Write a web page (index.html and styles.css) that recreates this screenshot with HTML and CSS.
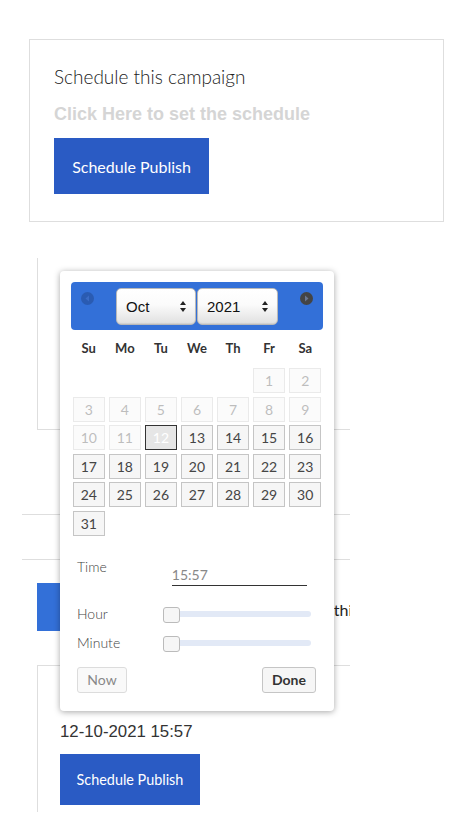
FILE: index.html
```html
<!DOCTYPE html>
<html lang="en">
<head>
<meta charset="utf-8">
<title>Schedule campaign</title>
<link rel="stylesheet" href="styles.css">
</head>
<body>
<main class="page">
  <section class="card">
    <h2 class="card-title">Schedule this campaign</h2>
    <p class="card-hint">Click Here to set the schedule</p>
    <button class="btn-primary btn-lg" type="button">Schedule Publish</button>
  </section>

  <div class="backdrop">
    <div class="ghost-box"></div>
    <div class="rule rule-first"></div>
    <div class="rule rule-second"></div>
    <div class="ghost-row">
      <button class="btn-ghost" type="button">Schedule Publish</button>
      <span class="ghost-text">Schedule this campaign</span>
    </div>
    <section class="ghost-card">
      <div class="stamp">12-10-2021 15:57</div>
      <button class="btn-primary btn-sm" type="button">Schedule Publish</button>
    </section>
  </div>

  <div class="picker">
    <div class="picker-header">
      <span class="nav nav-prev">
        <svg width="13" height="13" viewBox="0 0 13 13"><circle cx="6.5" cy="6.5" r="6.5" fill="#2a5bb2"/><path d="M8 3.5 L4.5 6.5 L8 9.5 Z" fill="#3b6cc6"/></svg>
      </span>
      <div class="selects">
        <div class="select select-month"><span>Oct</span>
          <svg width="6" height="11" viewBox="0 0 6 11"><path d="M3 0 L6 4 H0 Z M0 7 H6 L3 11 Z" fill="#222"/></svg>
        </div>
        <div class="select select-year"><span>2021</span>
          <svg width="6" height="11" viewBox="0 0 6 11"><path d="M3 0 L6 4 H0 Z M0 7 H6 L3 11 Z" fill="#222"/></svg>
        </div>
      </div>
      <span class="nav nav-next">
        <svg width="13" height="13" viewBox="0 0 13 13"><circle cx="6.5" cy="6.5" r="6.5" fill="#444"/><path d="M5 3.5 L8.5 6.5 L5 9.5 Z" fill="#6a7690"/></svg>
      </span>
    </div>

    <div class="dow">
      <span>Su</span><span>Mo</span><span>Tu</span><span>We</span><span>Th</span><span>Fr</span><span>Sa</span>
    </div>

    <div class="days">
      <span class="day empty"></span><span class="day empty"></span><span class="day empty"></span><span class="day empty"></span><span class="day empty"></span>
      <span class="day off">1</span><span class="day off">2</span>
      <span class="day off">3</span><span class="day off">4</span><span class="day off">5</span><span class="day off">6</span><span class="day off">7</span><span class="day off">8</span><span class="day off">9</span>
      <span class="day off">10</span><span class="day off">11</span><span class="day active">12</span><span class="day">13</span><span class="day">14</span><span class="day">15</span><span class="day">16</span>
      <span class="day">17</span><span class="day">18</span><span class="day">19</span><span class="day">20</span><span class="day">21</span><span class="day">22</span><span class="day">23</span>
      <span class="day">24</span><span class="day">25</span><span class="day">26</span><span class="day">27</span><span class="day">28</span><span class="day">29</span><span class="day">30</span>
      <span class="day">31</span>
    </div>

    <div class="time">
      <div class="time-row row-time">
        <span class="time-label">Time</span>
        <span class="time-value">15:57</span>
      </div>
      <div class="time-row row-hour">
        <span class="time-label">Hour</span>
        <div class="slider"><span class="handle"></span></div>
      </div>
      <div class="time-row row-minute">
        <span class="time-label">Minute</span>
        <div class="slider"><span class="handle"></span></div>
      </div>
    </div>

    <div class="picker-actions">
      <button class="pbtn pbtn-now" type="button">Now</button>
      <button class="pbtn pbtn-done" type="button">Done</button>
    </div>
  </div>
</main>
</body>
</html>
```

FILE: styles.css
```css
* { box-sizing: border-box; }

html, body {
  margin: 0;
  padding: 0;
  background: #fff;
}

body {
  font-family: Lato, "Liberation Sans", sans-serif;
  color: #222;
}

.page {
  position: relative;
  width: 466px;
  height: 830px;
  overflow: hidden;
  padding-top: 39px;
}

/* ---------- top card ---------- */
.card {
  margin-left: 29px;
  width: 415px;
  border: 1px solid #dedede;
  padding: 25px 24px 27px;
}

.card-title {
  margin: 0;
  font-size: 19px;
  line-height: 24px;
  font-weight: 300;
  color: #222;
}

.card-hint {
  margin: 14px 0 13px;
  font-family: "Liberation Sans", Arial, sans-serif;
  font-weight: 700;
  font-size: 18px;
  line-height: 22px;
  color: #d5d5d5;
}

.btn-primary {
  display: flex;
  align-items: center;
  justify-content: center;
  border: 0;
  padding: 0;
  background: #2a5bc4;
  color: #fff;
  font-family: Lato, sans-serif;
}

.btn-lg {
  width: 155px;
  height: 56px;
  font-size: 16px;
}

.btn-sm {
  width: 140px;
  height: 51px;
  font-size: 14.4px;
  margin-top: 11px;
}

/* ---------- content behind the popup ---------- */
.backdrop {
  margin-top: 36px;
  margin-left: 22px;
  width: 328px;
  overflow: hidden;
}

.ghost-box {
  margin-left: 15px;
  height: 172px;
  border-left: 1px solid #dedede;
  border-bottom: 1px solid #dedede;
}

.rule {
  height: 1px;
  background: #dedede;
}

.rule-first { margin-top: 84px; }
.rule-second { margin-top: 44px; }

.ghost-row {
  display: flex;
  align-items: flex-start;
  margin-top: 23px;
  white-space: nowrap;
}

.btn-ghost {
  flex: none;
  margin-left: 15px;
  width: 164px;
  height: 48px;
  border: 0;
  padding: 0;
  background: #3370d8;
  color: #fff;
  font-family: Lato, sans-serif;
  font-size: 16px;
}

.ghost-text {
  flex: none;
  margin-left: 65px;
  margin-top: 17px;
  font-size: 16px;
  line-height: 20px;
  color: #222;
}

.ghost-card {
  margin-top: 34px;
  margin-left: 15px;
  border-top: 1px solid #dedede;
  border-left: 1px solid #dedede;
  padding: 55px 0 7px 22px;
}

.stamp {
  font-family: "Liberation Sans", Arial, sans-serif;
  font-size: 16.8px;
  line-height: 22px;
  color: #333;
}

/* ---------- datepicker popup ---------- */
.picker {
  position: absolute;
  left: 60px;
  top: 271px;
  width: 274px;
  padding: 11px 11px 18px;
  background: #fff;
  border-radius: 4px;
  box-shadow: 0 1px 6px rgba(0, 0, 0, 0.35);
}

.picker-header {
  display: flex;
  justify-content: space-between;
  align-items: center;
  height: 48px;
  padding: 0 10px;
  background: #3370d8;
  border-radius: 4px;
}

.nav {
  align-self: flex-start;
  margin-top: 10px;
  width: 13px;
  height: 13px;
}

.nav svg { display: block; }

.selects {
  display: flex;
  gap: 1px;
}

.select {
  display: flex;
  align-items: center;
  justify-content: space-between;
  height: 37px;
  padding: 0 9px 0 9px;
  border: 1px solid #b9b9b9;
  border-radius: 5px;
  background: linear-gradient(#ffffff, #fbfbfb 45%, #e0e0e0);
  box-shadow: inset 0 -1px 1px rgba(0, 0, 0, 0.08);
  font-family: "Liberation Sans", Arial, sans-serif;
  font-size: 15px;
  color: #111;
}

.select svg { display: block; }

.select-month { width: 80px; }
.select-year { width: 81px; }

.dow {
  display: grid;
  grid-template-columns: repeat(7, 1fr);
  column-gap: 4.5px;
  width: 248px;
  margin: 8px 0 0 2px;
  font-size: 13px;
  line-height: 20px;
  font-weight: 700;
  color: #333;
  text-align: center;
}

.days {
  display: grid;
  grid-template-columns: repeat(7, 1fr);
  column-gap: 4.5px;
  row-gap: 3.6px;
  width: 248px;
  margin: 10px 0 0 2px;
}

.day {
  height: 25px;
  border: 1px solid #c5c5c5;
  background: #f6f6f6;
  color: #454545;
  font-size: 14px;
  line-height: 23px;
  text-align: center;
}

.day.empty {
  visibility: hidden;
}

.day.off {
  opacity: 0.35;
}

.day.active {
  border-color: #333;
  background: #e6e6e6;
  color: #fff;
}

.time {
  margin-top: 21.6px;
}

.time-row {
  display: grid;
  grid-template-columns: 40% 1fr;
  align-items: start;
}

.time-label {
  padding-left: 6px;
  font-size: 14px;
  line-height: 18px;
  font-weight: 300;
  color: #444;
}

.time-value {
  width: 135px;
  margin-top: 7px;
  font-size: 14px;
  line-height: 20px;
  color: #888;
  border-bottom: 1px solid #333;
}

.row-hour { margin-top: 19px; }
.row-minute { margin-top: 11px; }

.slider {
  position: relative;
  margin: 6px 12px 0 0;
  height: 6px;
  border-radius: 3px;
  background: #e2e9f6;
}

.handle {
  position: absolute;
  left: -9px;
  top: -4px;
  width: 17px;
  height: 16px;
  border: 1px solid #bbb;
  border-radius: 3px;
  background: #f6f6f6;
}

.picker-actions {
  display: flex;
  justify-content: space-between;
  margin-top: 15.4px;
  padding: 0 7px 0 6px;
}

.pbtn {
  height: 26px;
  padding: 0;
  border: 1px solid #c5c5c5;
  border-radius: 3px;
  background: #f6f6f6;
  font-family: Lato, sans-serif;
  font-size: 14px;
  line-height: 24px;
  color: #333;
}

.pbtn-now {
  width: 50px;
  border-color: #dcdcdc;
  background: #f9f9f9;
  color: #888;
}

.pbtn-done {
  width: 54px;
  font-weight: 700;
}
```
